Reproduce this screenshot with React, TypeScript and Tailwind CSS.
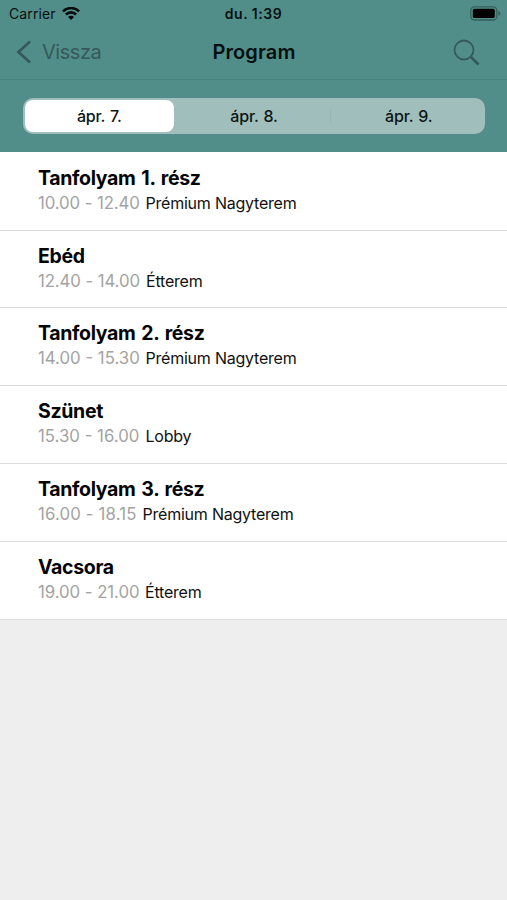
import { useState } from "react";
import { clsx } from "clsx";

interface Session {
  title: string;
  time: string;
  room: string;
  timeClass: string;
}

const DAYS = ["ápr. 7.", "ápr. 8.", "ápr. 9."];

const SESSIONS: Session[] = [
  { title: "Tanfolyam 1. rész", time: "10.00 - 12.40", room: "Prémium Nagyterem", timeClass: "w-[102.5px] tracking-[-0.1px]" },
  { title: "Ebéd", time: "12.40 - 14.00", room: "Étterem", timeClass: "w-[103px] tracking-[-0.1px]" },
  { title: "Tanfolyam 2. rész", time: "14.00 - 15.30", room: "Prémium Nagyterem", timeClass: "w-[102.5px] tracking-[0px]" },
  { title: "Szünet", time: "15.30 - 16.00", room: "Lobby", timeClass: "w-[102.5px] tracking-[0px]" },
  { title: "Tanfolyam 3. rész", time: "16.00 - 18.15", room: "Prémium Nagyterem", timeClass: "w-[99.5px] tracking-[0.15px]" },
  { title: "Vacsora", time: "19.00 - 21.00", room: "Étterem", timeClass: "w-[102px] tracking-[-0.05px]" },
];

function WifiIcon() {
  return (
    <svg width="18" height="14" viewBox="0 0 18 14" fill="none" stroke="#050a0a" strokeWidth="2.6">
      <path d="M.9 4.4a11.5 11.5 0 0 1 16.2 0" />
      <path d="M3.9 7.5a7.2 7.2 0 0 1 10.200 0" />
      <path d="M9 13 6 10a4.2 4.2 0 0 1 6 0Z" fill="#050a0a" stroke="none" />
    </svg>
  );
}

function BatteryIcon() {
  return (
    <svg width="31" height="15" viewBox="0 0 31 15" fill="none">
      <rect x="0.8" y="0.8" width="26" height="13.2" rx="3.6" stroke="#34605c" strokeWidth="1.3" />
      <rect x="2.8" y="2.8" width="22" height="9.2" rx="1.6" fill="#000" />
      <path d="M28.4 5v4.8c1.2-.4 1.9-1.3 1.9-2.4S29.6 5.4 28.4 5Z" fill="#34605c" />
    </svg>
  );
}

function StatusBar() {
  return (
    <div className="grid h-[27px] grid-cols-3 items-center text-[14px] text-[#071111]">
      <div className="flex items-center gap-[6px] pl-[9px]">
        <span className="tracking-[0.12px]">Carrier</span>
        <WifiIcon />
      </div>
      <span className="text-center font-semibold tracking-[0.5px]">du. 1:39</span>
      <div className="flex justify-end pr-[6px]">
        <BatteryIcon />
      </div>
    </div>
  );
}

function NavBar() {
  return (
    <div className="grid h-[53px] grid-cols-3 items-center border-b border-[#4b837e] pb-[2px]">
      <button className="flex items-center gap-[10px] pl-4 text-[20px] text-[#35595a]">
        <svg width="16" height="24" viewBox="0 0 16 24" fill="none" stroke="#35595a" strokeWidth="2.7">
          <path d="M14 1.5 2.5 12l11.5 10.5" />
        </svg>
        <span className="tracking-[-0.45px]">Vissza</span>
      </button>
      <h1 className="pl-px text-center text-[20px] font-semibold tracking-[0.1px] text-[#041010]">Program</h1>
      <button className="flex justify-end pr-[27px]">
        <svg width="27" height="27" viewBox="0 0 27 27" fill="none" stroke="#35595a" strokeWidth="1.8">
          <circle cx="11" cy="11" r="9.5" />
          <path d="m18 18 7.5 7.5" strokeWidth="2.6" />
        </svg>
      </button>
    </div>
  );
}

function DayTabs({ active, onChange }: { active: number; onChange: (index: number) => void }) {
  return (
    <div className="flex h-[72px] items-center pl-[23px] pr-[22px]">
      <div className="flex h-[36px] w-full gap-[6px] rounded-[10px] bg-[#a0bebb] p-[2px]">
        {DAYS.map((day, index) => (
          <button
            key={day}
            onClick={() => onChange(index)}
            className={clsx(
              "relative flex-1 rounded-[8px] text-[16px] font-medium tracking-[-0.2px] text-[#0b1515] [word-spacing:1px]",
              index === active && "bg-white",
            )}
          >
            {day}
            {/* Divider between two inactive segments */}
            {index > 0 && index - 1 !== active && index !== active && (
              <span className="absolute left-[-4px] top-[9px] h-[14px] w-px bg-[#98b6b4]" />
            )}
          </button>
        ))}
      </div>
    </div>
  );
}

function SessionRow({ session }: { session: Session }) {
  return (
    <li className="h-[77.8px] border-b border-[#dcdcdc] bg-white pl-[38px] pt-[13px]">
      <h2 className="text-[19.5px] font-bold leading-[25px] tracking-[-0.33px] text-[#050505] [word-spacing:1.5px]">
        {session.title}
      </h2>
      <p className="flex items-baseline gap-[5px] whitespace-nowrap leading-[25px]">
        <span className={clsx("text-[16.8px] text-[#a3a3a3]", session.timeClass)}>{session.time}</span>
        <span className="text-[16px] tracking-[-0.22px] text-[#111]">{session.room}</span>
      </p>
    </li>
  );
}

export default function App() {
  const [activeDay, setActiveDay] = useState(0);

  return (
    <div className="h-[900px] w-[507px] overflow-hidden bg-[#eee] font-['Inter','Liberation_Sans',sans-serif]">
      <header className="bg-[#528e89]">
        <StatusBar />
        <NavBar />
        <DayTabs active={activeDay} onChange={setActiveDay} />
      </header>
      <ul className="bg-white pt-[0.8px]">
        {SESSIONS.map((session) => (
          <SessionRow key={session.title} session={session} />
        ))}
      </ul>
    </div>
  );
}
